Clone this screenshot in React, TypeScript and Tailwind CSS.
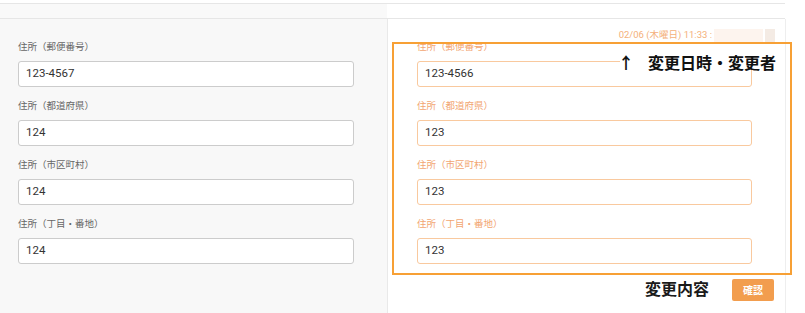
const fields = [
    { label: '住所（郵便番号）', before: '123-4567', after: '123-4566' },
    { label: '住所（都道府県）', before: '124', after: '123' },
    { label: '住所（市区町村）', before: '124', after: '123' },
    { label: '住所（丁目・番地）', before: '124', after: '123' },
]

export default function App() {
    return (
        <div className="relative w-[805px] h-[313px] bg-white overflow-hidden font-['Roboto','Noto_Sans_CJK_JP',sans-serif]">
            <div className="h-[3px]" />
            <div className="flex w-[785px] h-[16px] border-y border-[#e6e6e6]">
                <div className="w-[387px] bg-[#f9f9f9]" />
            </div>

            <div className="flex h-[294px]">
                {/* current values */}
                <div className="w-[388px] bg-[#f8f8f8] border-r border-[#e9e9e9] pt-[21px] pl-[18px]">
                    <div className="flex flex-col gap-[12px]">
                        {fields.map((f) => (
                            <div key={f.label}>
                                <div className="h-[14px] leading-[14px] text-[9.5px] text-[#666]">{f.label}</div>
                                <div className="mt-[7px] h-[26px] w-[336px] flex items-center px-[7px] bg-white border border-[#cccccc] rounded-[3px] text-[11.5px] text-[#333]">
                                    {f.before}
                                </div>
                            </div>
                        ))}
                    </div>
                </div>

                {/* changed values */}
                <div className="w-[398px] border-r border-[#eeeeee] pt-[10px] pl-[29px] pr-[10px]">
                    <div className="flex justify-end items-center h-[13px] text-[9.5px] text-[#f4b07a]">
                        <span className="mr-[2px]">02/06 (木曜日) 11:33 :</span>
                        <span className="w-[49px] h-[13px] bg-[#fdf4ee]" />
                        <span className="ml-[2px] w-[10px] h-[13px] bg-[#f4ebe4]" />
                    </div>
                    <div className="mt-[-2px] flex flex-col gap-[12px]">
                        {fields.map((f) => (
                            <div key={f.label}>
                                <div className="h-[14px] leading-[14px] text-[9.5px] text-[#f2a571]">{f.label}</div>
                                <div className="mt-[7px] h-[26px] w-[335px] flex items-center px-[7px] bg-white border border-[#f9c99e] rounded-[3px] text-[11.5px] text-[#333]">
                                    {f.after}
                                </div>
                            </div>
                        ))}
                    </div>
                    <div className="mt-[15px] flex justify-end items-center pr-[1px]">
                        <span className="mr-[23px] text-[16px] leading-[20px] font-bold text-[#1a1a1a]">変更内容</span>
                        <button className="w-[42px] h-[22px] rounded-[2px] bg-[#f29d4e] text-white text-[10px] font-bold">確認</button>
                    </div>
                </div>
            </div>

            {/* annotation overlay */}
            <div className="pointer-events-none absolute left-[392px] top-[42px] w-[400px] h-[233px] border-2 border-[#f7a035]" />
            <div className="absolute left-[620px] top-[60px] w-[131px] h-[2px] bg-white" />
            <div className="absolute left-[618px] top-[54px] flex items-center h-[20px] text-[16px] font-bold text-[#111]">
                <span className="w-[30px]">↑</span>
                <span>変更日時・変更者</span>
            </div>
        </div>
    )
}
